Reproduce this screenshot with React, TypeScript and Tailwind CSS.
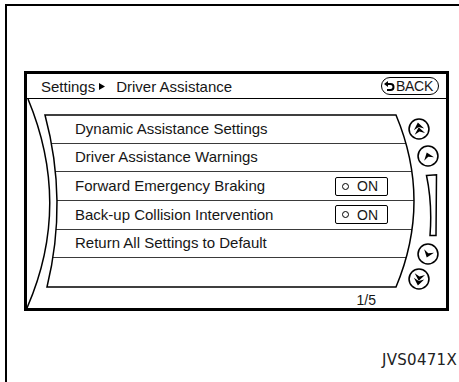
import React from 'react';

interface Row {
  label: string;
  toggle?: boolean;
}

const rows: Row[] = [
  { label: 'Dynamic Assistance Settings' },
  { label: 'Driver Assistance Warnings' },
  { label: 'Forward Emergency Braking', toggle: true },
  { label: 'Back-up Collision Intervention', toggle: true },
  { label: 'Return All Settings to Default' },
  { label: '' },
];

const LENS = 'M0,0 L351,0 Q387,86 351,172 L2,172 Q23,86 0,0 Z';

const Arrowhead: React.FC<{ y: number }> = ({ y }) => (
  <path d={`M10.5,${y} L15.5,${y + 6.5} L10.5,${y + 4.2} L5.5,${y + 6.5} Z`} fill="black" />
);

const RoundButton: React.FC<{ double?: boolean; down?: boolean; tilt: number; className: string }> = ({
  double,
  down,
  tilt,
  className,
}) => (
  <svg width="22" height="22" viewBox="0 0 21 21" className={className}>
    <circle cx="10.5" cy="10.5" r="9.5" fill="white" stroke="black" strokeWidth="1.5" />
    <g transform={`rotate(${(down ? 180 : 0) + tilt} 10.5 10.5)`}>
      {double ? (
        <>
          <Arrowhead y={4.3} />
          <Arrowhead y={8.8} />
        </>
      ) : (
        <Arrowhead y={7} />
      )}
    </g>
  </svg>
);

const Toggle: React.FC = () => (
  <div className="flex items-center w-[53px] h-[19px] border-[1.5px] border-black rounded-[2px] pl-[6px]">
    <span className="w-[7px] h-[7px] rounded-full border-[1.5px] border-black" />
    <span className="ml-[8px] text-[14px] leading-none">ON</span>
  </div>
);

export default function App() {
  return (
    <div
      className="w-[459px] h-[382px] bg-white pt-[4px] pl-[5px] text-[#161616] overflow-hidden"
      style={{ fontFamily: '"Liberation Sans", Arial, sans-serif' }}
    >
      <div className="h-full border-t-2 border-l-2 border-black flex flex-col">
        {/* screen */}
        <div className="ml-[17px] mt-[65px] w-[425px] h-[240px] border-[3px] border-black flex flex-col">
          <div className="h-[25px] border-b border-black flex items-center justify-between pl-[14px] pr-[7px]">
            <div className="flex items-center text-[15px] leading-none">
              <span>Settings</span>
              <svg width="6" height="7" viewBox="0 0 6 7" className="ml-[4px]">
                <path d="M0,0 L6,3.5 L0,7 Z" fill="black" />
              </svg>
              <span className="ml-[11px]">Driver Assistance</span>
            </div>
            <div className="flex items-center h-[18px] w-[58px] border-[1.5px] border-black rounded-full pl-[2px]">
              <svg width="11" height="11" viewBox="0 0 11 11">
                <path d="M3.5,3 H6.5 A3,3 0 0 1 6.5,9 H3" fill="none" stroke="black" strokeWidth="2" />
                <path d="M0,3 L4,0 L4,6 Z" fill="black" />
              </svg>
              <span className="ml-[1px] text-[14px] leading-none tracking-[-0.3px]">BACK</span>
            </div>
          </div>

          <div className="relative flex-1 flex">
            <svg className="absolute left-0 top-0 pointer-events-none" width="60" height="209">
              <path d="M1,0 Q45,106 0,209" fill="none" stroke="black" strokeWidth="1.5" />
            </svg>

            <div className="ml-[18px] w-[369px] flex flex-col">
              <div className="relative mt-[16px] h-[172px]">
                <div className="h-full flex flex-col [clip-path:path('M0,0_L351,0_Q387,86_351,172_L2,172_Q23,86_0,0_Z')]">
                  {rows.map((r, i) => (
                    <div
                      key={i}
                      className={`h-[28.67px] shrink-0 flex items-center justify-between pl-[30px] pr-[26px] text-[15px] ${
                        i < rows.length - 1 ? 'border-b-[1.5px] border-[#3a3a3a]' : ''
                      }`}
                    >
                      <span>{r.label}</span>
                      {r.toggle && <Toggle />}
                    </div>
                  ))}
                </div>
                <svg className="absolute inset-0 overflow-visible pointer-events-none" width="369" height="172">
                  <path d={LENS} fill="none" stroke="black" strokeWidth="1.5" />
                </svg>
              </div>
              <div className="flex justify-end pr-[38px] mt-[5px] text-[14px] leading-[16px]">1/5</div>
            </div>

            <div className="-ml-[7px] w-[39px] flex flex-col">
              <RoundButton double tilt={-10} className="mt-[19px] ml-[1px]" />
              <RoundButton tilt={-20} className="mt-[5px] ml-[10px]" />
              <svg width="13" height="63" viewBox="0 0 13 63" className="mt-[7px] ml-[18px]">
                <path d="M1.5,1.5 L11.5,0.8 L11,61.5 L5,61.5 Q7.5,30 1.5,1.5 Z" fill="white" stroke="black" strokeWidth="1.5" />
              </svg>
              <RoundButton down tilt={20} className="mt-[6px] ml-[10px]" />
              <RoundButton double down tilt={10} className="mt-[3px] ml-[1px]" />
            </div>
          </div>
        </div>

        <div className="mt-[40px] flex justify-end pr-[2px]">
          <span
            className="text-[15px] leading-[18px] tracking-[0.3px] text-[#222]"
            style={{ fontFamily: '"DejaVu Sans", sans-serif' }}
          >
            JVS0471X
          </span>
        </div>
      </div>
    </div>
  );
}
